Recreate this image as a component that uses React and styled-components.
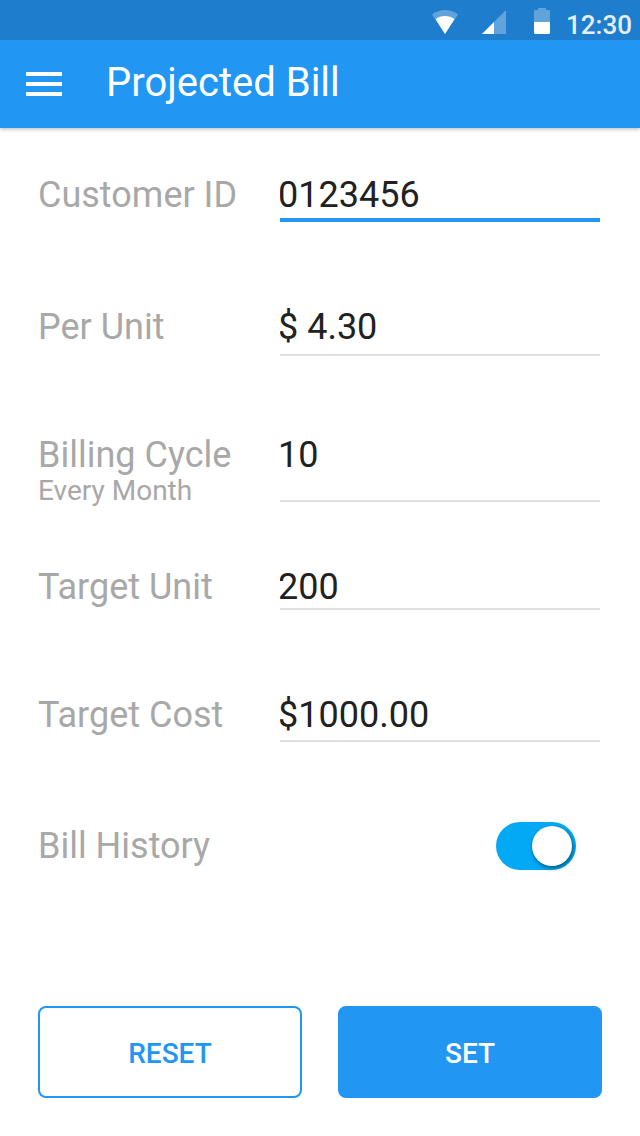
import { useState } from 'react';
import styled, { createGlobalStyle } from 'styled-components';

const fields = [
  { id: 'customer', label: 'Customer ID', value: '0123456', height: 132, space: 2, active: true },
  { id: 'per-unit', label: 'Per Unit', value: '$ 4.30', height: 128, space: 6 },
  { id: 'cycle', label: 'Billing Cycle', hint: 'Every Month', value: '10', height: 132, space: 24 },
  { id: 'target-unit', label: 'Target Unit', value: '200', height: 128, space: 0 },
  { id: 'target-cost', label: 'Target Cost', value: '$1000.00', height: 128, space: 4 },
];

const StatusIcons = () => (
  <SCStatusIcons>
    <svg width="26" height="24" viewBox="0 0 26 24" aria-hidden="true">
      <path d="M0 4.5C7 -1.5 19 -1.5 26 4.5L13 24Z" fill="#fff" fillOpacity="0.3" />
      <path d="M3.5 9C9 5 17 5 22.5 9L13 24Z" fill="#fff" />
    </svg>
    <svg width="24" height="24" viewBox="0 0 24 24" aria-hidden="true">
      <path d="M0 24L24 0V24Z" fill="#fff" fillOpacity="0.3" />
      <path d="M0 24L12 12V24Z" fill="#fff" />
    </svg>
    <svg width="16" height="26" viewBox="0 0 16 26" aria-hidden="true">
      <path d="M4 0H12V2H15L16 3V14H0V3L1 2H4Z" fill="#fff" fillOpacity="0.3" />
      <path d="M0 14H16V25L15 26H1L0 25Z" fill="#fff" />
    </svg>
  </SCStatusIcons>
);

const Field = ({ id, label, hint, value, height, space, active }) => (
  <SCField $height={height}>
    <SCLabel htmlFor={id}>
      {label}
      {hint && <SCHint>{hint}</SCHint>}
    </SCLabel>
    <SCInput id={id} type="text" defaultValue={value} $space={space} $active={active} />
  </SCField>
);

const App = () => {
  const [history, setHistory] = useState(true);

  return (
    <>
      <GlobalStyle />
      <SCStatusBar>
        <StatusIcons />
        <SCTime>12:30</SCTime>
      </SCStatusBar>
      <SCHeader>
        <SCMenuButton type="button" aria-label="Menu">
          <svg width="36" height="24" viewBox="0 0 36 24" aria-hidden="true">
            <path d="M0 0H36V4H0ZM0 10H36V14H0ZM0 20H36V24H0Z" fill="#fff" />
          </svg>
        </SCMenuButton>
        <SCTitle>Projected Bill</SCTitle>
      </SCHeader>
      <SCForm onSubmit={(e) => e.preventDefault()}>
        {fields.map((field) => (
          <Field key={field.id} {...field} />
        ))}
        <SCSwitchRow>
          <SCLabel htmlFor="history">Bill History</SCLabel>
          <SCSwitch
            id="history"
            type="checkbox"
            role="switch"
            checked={history}
            onChange={(e) => setHistory(e.target.checked)}
          />
        </SCSwitchRow>
        <SCActions>
          <SCButton type="reset">RESET</SCButton>
          <SCButton type="submit" $primary>
            SET
          </SCButton>
        </SCActions>
      </SCForm>
    </>
  );
};

export default App;

const GlobalStyle = createGlobalStyle`
  * {
    box-sizing: border-box;
  }
  body {
    margin: 0;
    background-color: #fff;
    color: #212121;
    font-family: Roboto, 'Liberation Sans', sans-serif;
  }
  input,
  button {
    font-family: inherit;
  }
`;

const SCStatusBar = styled.div`
  position: relative;
  z-index: 1;
  display: flex;
  justify-content: flex-end;
  gap: 16px;
  height: 40px;
  padding: 8px 8px 0 0;
  background-color: #1e7dcd;
`;

const SCStatusIcons = styled.div`
  display: flex;
  align-items: flex-end;
  height: 26px;
  svg + svg {
    margin-left: 24px;
  }
  svg:last-child {
    margin-left: 28px;
  }
`;

const SCTime = styled.span`
  color: #e4effa;
  font-size: 26px;
  font-weight: 500;
  line-height: 34px;
`;

const SCHeader = styled.header`
  display: flex;
  align-items: center;
  gap: 44px;
  height: 88px;
  padding: 0 26px;
  background-color: #2196f3;
  box-shadow: 0 1px 4px rgba(0, 0, 0, 0.3);
`;

const SCMenuButton = styled.button`
  display: flex;
  padding: 0;
  border: 0;
  background: none;
  cursor: pointer;
`;

const SCTitle = styled.h1`
  margin: 0;
  padding-bottom: 2px;
  color: #fff;
  font-size: 40px;
  font-weight: 400;
  line-height: 48px;
`;

const SCForm = styled.form`
  padding: 46px 38px 38px;
`;

const SCField = styled.div`
  display: grid;
  grid-template-columns: 242px 1fr;
  align-items: start;
  min-height: ${({ $height }) => $height}px;
  padding-right: 2px;
`;

const SCLabel = styled.label`
  color: #a8a8a8;
  font-size: 36px;
  line-height: 42px;
`;

const SCHint = styled.span`
  display: block;
  font-size: 28px;
  line-height: 30px;
`;

const SCInput = styled.input`
  width: 100%;
  min-width: 0;
  height: ${({ $space, $active }) => 42 + $space + ($active ? 4 : 2)}px;
  padding: 0 0 ${({ $space }) => $space}px;
  border: 0;
  border-bottom: ${({ $active }) => ($active ? '4px solid #2196f3' : '2px solid #e0e0e0')};
  border-radius: 0;
  background: none;
  color: #212121;
  font-size: 36px;
  line-height: 42px;
  text-indent: -2px;
  outline: none;
`;

const SCSwitchRow = styled.div`
  display: flex;
  align-items: center;
  justify-content: space-between;
  padding-right: 26px;
`;

const SCSwitch = styled.input`
  appearance: none;
  display: flex;
  align-items: center;
  width: 80px;
  height: 48px;
  margin: 0;
  padding: 0 4px;
  border-radius: 24px;
  background-color: #bdbdbd;
  cursor: pointer;
  &::before {
    content: '';
    width: 40px;
    height: 40px;
    border-radius: 50%;
    background-color: #fff;
    box-shadow: 1px 2px 4px rgba(0, 0, 0, 0.5);
  }
  &:checked {
    justify-content: flex-end;
    background-color: #03a9f4;
  }
`;

const SCActions = styled.div`
  display: flex;
  gap: 36px;
  margin-top: 136px;
`;

const SCButton = styled.button`
  flex: 1;
  height: 92px;
  padding: 2px 0 0;
  border: 2px solid #2196f3;
  border-radius: 8px;
  background-color: ${({ $primary }) => ($primary ? '#2196f3' : '#fff')};
  color: ${({ $primary }) => ($primary ? '#fff' : '#2196f3')};
  font-size: 28px;
  font-weight: 500;
  cursor: pointer;
`;
